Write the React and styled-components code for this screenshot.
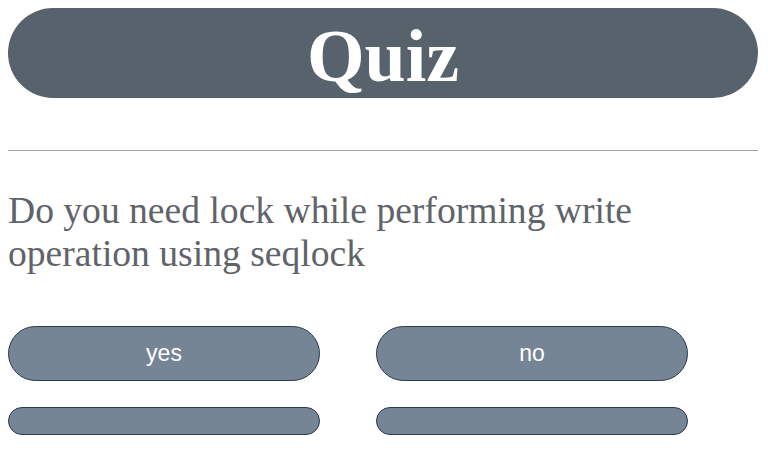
import React from "react";
import styled, { createGlobalStyle } from "styled-components";

const GlobalStyle = createGlobalStyle`
  body {
    margin: 8px;
    background: #ffffff;
    font-family: "Liberation Serif", "Times New Roman", serif;
  }
`;

const Page = styled.div`
  display: flex;
  flex-direction: column;
  width: 750px;
`;

const Header = styled.header`
  height: 90px;
  box-sizing: border-box;
  padding-top: 6px;
  border-radius: 45px;
  background: #57626c;
  display: flex;
  align-items: center;
  justify-content: center;
`;

const Title = styled.h1`
  margin: 0;
  font-family: "Liberation Serif", "Times New Roman", serif;
  font-size: 74px;
  font-weight: bold;
  line-height: 1;
  color: #ffffff;
`;

const Rule = styled.hr`
  margin: 52px 0 0;
  border: none;
  border-top: 1px solid #a3a3a3;
  height: 0;
`;

const Question = styled.p`
  margin: 38px 0 0;
  width: 680px;
  font-size: 37.6px;
  line-height: 43px;
  color: #606369;
`;

const Answers = styled.div`
  margin-top: 51px;
  display: grid;
  grid-template-columns: 312px 312px;
  column-gap: 56px;
  row-gap: 26px;
`;

const Answer = styled.button`
  height: ${(p) => (p.$small ? "28px" : "55px")};
  box-sizing: border-box;
  border: 1px solid #2c3a4f;
  border-radius: 28px;
  background: #768595;
  color: #ffffff;
  font-family: "Liberation Sans", Arial, sans-serif;
  font-size: 23px;
  padding: 0;
  cursor: pointer;
`;

const answers = ["yes", "no", "", ""];

export default function App() {
  return (
    <>
      <GlobalStyle />
      <Page>
        <Header>
          <Title>Quiz</Title>
        </Header>
        <Rule />
        <Question>Do you need lock while performing write operation using seqlock</Question>
        <Answers>
          {answers.map((a, i) => (
            <Answer key={i} $small={!a}>{a}</Answer>
          ))}
        </Answers>
      </Page>
    </>
  );
}
